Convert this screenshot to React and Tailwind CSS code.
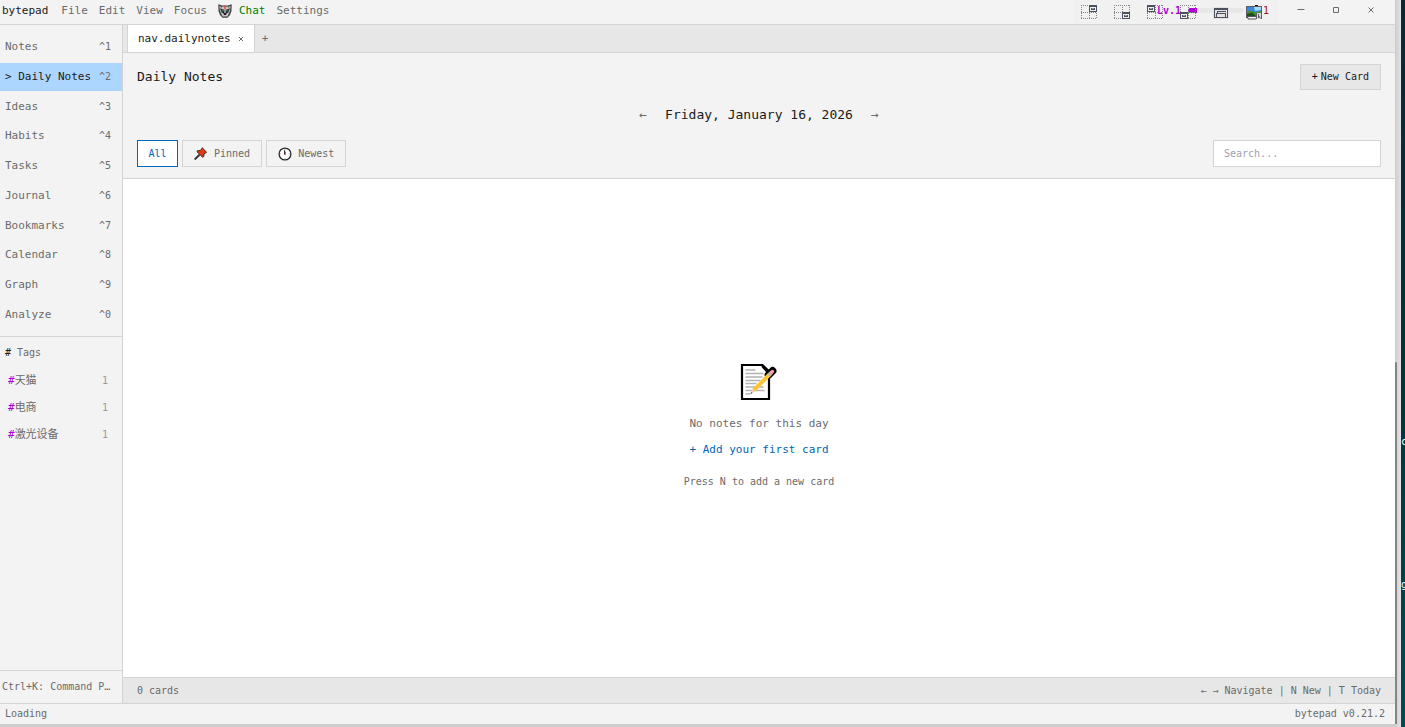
import React from "react";

const NAV = ["Notes", "Daily Notes", "Ideas", "Habits", "Tasks", "Journal", "Bookmarks", "Calendar", "Graph", "Analyze"];
const TAGS = ["天猫", "电商", "激光设备"];

function WolfIcon() {
  return (
    <svg width="14" height="14" viewBox="0 0 14 14" aria-hidden="true">
      <path d="M0.3 0.3 L4 1.5 H10 L13.7 0.3 L13.5 7 L12 11 L9.5 13.8 H4.5 L2 11 L0.5 7Z" fill="#3f3f3f" />
      <path d="M1.3 1.8 L3.3 3 L1.8 6Z M12.7 1.8 L10.7 3 L12.2 6Z" fill="#d3aaa4" />
      <path d="M3.8 2.5 H10.2 L12 7 L9.5 12.5 H4.5 L2 7Z" fill="#c4c4c4" />
      <path d="M3 4.8 L6.3 6 V9.2 L3.5 8.5Z M11 4.8 L7.7 6 V9.2 L10.5 8.5Z" fill="#161616" />
      <path d="M4.3 6.2h1.4v1.2H4.3z M8.3 6.2h1.4v1.2H8.3z" fill="#2fb6c8" />
      <path d="M6.3 1.5h1.4v4H6.3z" fill="#e2472f" />
      <path d="M5.3 9 H8.7 L8 11 H6Z" fill="#1c1c1c" />
    </svg>
  );
}

function PinIcon() {
  return (
    <svg width="14" height="14" viewBox="0 0 14 14" aria-hidden="true">
      <path d="M5 8.2 L1.3 11.9" stroke="#333" strokeWidth="2" strokeLinecap="round" />
      <path d="M8.2 0.8 L12.6 5.2 L11.6 6 L10 6.9 L9.8 9.6 L8.6 10.2 L3 4.8 L3.6 3.6 L6.3 3.6 L7.4 2.2Z" fill="#e5390f" stroke="#222" strokeWidth="0.9" strokeLinejoin="round" />
    </svg>
  );
}

function ClockIcon() {
  return (
    <svg width="14" height="14" viewBox="0 0 14 14" aria-hidden="true">
      <circle cx="7" cy="7" r="5.9" fill="#fff" stroke="#2b2b2b" strokeWidth="1.3" />
      <path d="M7 2v1M7 11v1M2 7h1M11 7h1" stroke="#999" strokeWidth="0.7" />
      <path d="M6.6 3.3 V7.6" stroke="#222" strokeWidth="1.1" />
      <path d="M7.3 5 V8" stroke="#d33" strokeWidth="0.9" />
    </svg>
  );
}

function MemoIcon() {
  return (
    <svg width="38" height="38" viewBox="0 0 38 38" aria-hidden="true">
      <path d="M2 2 H22.5 L29 8.5 V36 H2Z" fill="#fff" stroke="#000" strokeWidth="2.2" />
      <path d="M22 1 L29 7.5 L27 10 L21.5 4Z" fill="#000" />
      <path d="M5.5 7h10M5.5 10.5h18M5.5 14h17M5.5 17.5h15M5.5 20.5h11M5.5 24h18M5.5 27.5h19M5.5 31h5" stroke="#b3b3b3" strokeWidth="1.3" />
      <path d="M28.5 12 L32.6 7.9" stroke="#000" strokeWidth="7.6" strokeLinecap="round" />
      <path d="M13.8 27.2 L29 12" stroke="#fdc52f" strokeWidth="4" />
      <path d="M28.7 12.3 L31 10" stroke="#b9bcc4" strokeWidth="4" />
      <path d="M30.8 10.2 L32.4 8.6" stroke="#f1a0a0" strokeWidth="3.6" strokeLinecap="round" />
      <path d="M12.4 25.8 L15.2 28.6 L10.5 30.9Z" fill="#f6cfae" />
      <path d="M11.3 29.1 L12.4 30.1 L10.5 30.9Z" fill="#444" />
    </svg>
  );
}

function SnapIcon({ x, y }) {
  return (
    <svg width="17" height="15" viewBox="0 0 17 15" shapeRendering="crispEdges" aria-hidden="true">
      <path d="M0 0.5H16M0 7.5H16M0 13.5H16M0.5 0V14M8.5 0V14M15.5 0V14" fill="none" stroke="#858585" strokeDasharray="1 1" />
      <path d={`M${x} ${y}h8v7h-8z`} fill="#4c5160" />
      <path d={`M${x + 1} ${y + 2}h6v4h-6z`} fill="#f1f1f1" />
      <path d={`M${x + 2} ${y + 3}h4v2h-4z`} fill="#4c5160" />
      <path d={`M${x + 3} ${y + 3}h2v1h-2z`} fill="#9ea2ad" />
    </svg>
  );
}

function CardsIcon() {
  return (
    <svg width="17" height="15" viewBox="0 0 17 15" shapeRendering="crispEdges" aria-hidden="true">
      <rect x="0" y="2" width="16" height="12" fill="#e2e2e5" />
      <path d="M1.5 12V3.5h13v9h-3" fill="none" stroke="#4c5160" />
      <path d="M1 4.5h14" stroke="#4c5160" />
      <path d="M4.5 8V6.5H13M1 12.5h11V8.5H3.5V12" fill="none" stroke="#4c5160" />
    </svg>
  );
}

function MonitorIcon() {
  return (
    <svg width="17" height="15" viewBox="0 0 17 15" aria-hidden="true">
      <path d="M9 0h3v1H9z" fill="#111" />
      <rect x="0.5" y="1.5" width="15" height="10" fill="#3489dc" stroke="#555a66" />
      <path d="M8 2h7v3l-6 1z" fill="#a5dafa" />
      <path d="M1 6.5Q4 5 7.5 6.5T15 6V11H1Z" fill="#4b8c32" />
      <path d="M1 9l5-1.5 4 3.5H1z" fill="#1f4f17" />
      <path d="M0 12.5h2v1.5h8" fill="none" stroke="#555" />
      <path d="M10 8h6v6h-6z" fill="#d9dade" />
      <path d="M10.5 8v6M15.5 8v6M12.5 9v4M12.5 10.5l2 3" fill="none" stroke="#5b5e68" />
    </svg>
  );
}

const menuItem = "text-[#6b6b6b] whitespace-nowrap";

export default function App() {
  return (
    <div className="flex h-screen w-full overflow-hidden bg-[#cdcdcd] font-['DejaVu_Sans_Mono','Noto_Sans_CJK_SC',monospace] text-[11px] leading-4 text-[#6b6b6b]">
      <div className="mb-[3px] flex min-w-0 flex-1 flex-col bg-[#f3f3f3]">
        <header className="flex h-[25px] shrink-0 items-start justify-between border-b border-[#d4d4d4] pl-0.5">
          <nav className="flex h-[22px] items-center">
            <span className="mr-[13px] text-[#1a1a1a]">bytepad</span>
            <div className="flex items-center gap-[11px]">
              <button className={menuItem}>File</button>
              <button className={menuItem}>Edit</button>
              <button className={menuItem}>View</button>
              <button className={menuItem}>Focus</button>
              <button className="flex items-center gap-[7px] whitespace-nowrap text-[#008000]">
                <WolfIcon />
                Chat
              </button>
              <button className={menuItem}>Settings</button>
            </div>
          </nav>
          <div className="flex h-full items-center">
            <div className="relative mr-1 flex h-full w-[206px] items-center bg-[#f1f1f1] pb-[3px] pl-[84px] text-[10px]">
              <span className="w-[31px] font-bold text-[#af00db]">Lv.1</span>
              <div className="h-[5px] w-14 overflow-hidden rounded-full bg-[#e7e7e7]">
                <div className="h-full w-[9px] bg-[#af00db]" />
              </div>
              <span className="ml-[19px] text-[#a31515]">1</span>
              <div className="absolute top-[5px] left-2 flex gap-4">
                <SnapIcon x={8} y={0} />
                <SnapIcon x={8} y={7} />
                <SnapIcon x={0} y={0} />
                <SnapIcon x={0} y={7} />
                <CardsIcon />
                <MonitorIcon />
              </div>
            </div>
            <div className="flex h-full pr-[7px] pb-1">
              <button aria-label="Minimize" className="grid w-[35px] place-items-center">
                <svg width="8" height="8" viewBox="0 0 8 8"><path d="M0.5 3.5h7" stroke="#6b6b6b" /></svg>
              </button>
              <button aria-label="Maximize" className="grid w-[35px] place-items-center">
                <svg width="8" height="8" viewBox="0 0 8 8"><path d="M1.5 1.5h5v5h-5z" fill="none" stroke="#6b6b6b" /></svg>
              </button>
              <button aria-label="Close" className="grid w-[35px] place-items-center">
                <svg width="8" height="8" viewBox="0 0 8 8"><path d="M1.5 1.5l5 5M6.5 1.5l-5 5" stroke="#6b6b6b" /></svg>
              </button>
            </div>
          </div>
        </header>

        <div className="flex min-h-0 flex-1">
          <aside className="flex w-[123px] shrink-0 flex-col border-r border-[#d4d4d4]">
            <nav className="border-b border-[#d4d4d4] pt-2 pb-[7px]">
              <ul className="grid h-[296px] grid-rows-10 gap-px">
                {NAV.map((label, i) => (
                  <li key={label} className="grid">
                    <button
                      className={
                        label === "Daily Notes"
                          ? "flex items-center justify-between bg-[#add6ff] pr-[11px] pl-[5px] text-[#1a1a1a]"
                          : "flex items-center justify-between pr-[11px] pl-[5px]"
                      }
                    >
                      <span className="whitespace-pre">{label === "Daily Notes" ? "> Daily Notes" : label}</span>
                      <span className="text-[10px] text-[#6b6b6b]">^{(i + 1) % 10}</span>
                    </button>
                  </li>
                ))}
              </ul>
            </nav>
            <section className="min-h-0 flex-1 pt-2">
              <h2 className="px-[5px] text-[10px]"><span className="text-[#1a1a1a]">#</span> Tags</h2>
              <ul className="pt-[6px]">
                {TAGS.map((tag) => (
                  <li key={tag}>
                    <button className="flex h-[27px] w-full items-center justify-between pr-[14px] pl-2">
                      <span><span className="text-[#af00db]">#</span>{tag}</span>
                      <span className="text-[10px] text-[#9a9a9a]">1</span>
                    </button>
                  </li>
                ))}
              </ul>
            </section>
            <div className="h-[33px] shrink-0 truncate border-t border-[#d4d4d4] pt-2 pr-2 pl-0.5 text-[10px]">
              Ctrl+K: Command Palette
            </div>
          </aside>

          <main className="flex min-w-0 flex-1 flex-col">
            <div className="flex h-7 shrink-0 border-b border-[#d4d4d4] bg-[#e7e7e7] pl-1">
              <div className="flex items-center gap-[7px] border-x border-[#d4d4d4] bg-white px-[10px] text-[#1a1a1a]">
                <span>nav.dailynotes</span>
                <button aria-label="Close tab">
                  <svg width="6" height="6" viewBox="0 0 6 6"><path d="M1 1l4 4M5 1l-4 4" stroke="#6b6b6b" /></svg>
                </button>
              </div>
              <button className="px-[7px]" aria-label="New tab">+</button>
            </div>

            <div className="flex shrink-0 flex-col border-b border-[#d4d4d4] px-[14px] py-[11px]">
              <div className="flex items-center justify-between">
                <h1 className="text-[13px] text-[#1a1a1a]">Daily Notes</h1>
                <button className="flex h-[26px] items-center gap-[3px] border border-[#d4d4d4] bg-[#e7e7e7] px-[11px] text-[10px] text-[#1a1a1a]">
                  <span>+</span>
                  <span>New Card</span>
                </button>
              </div>
              <div className="flex h-[50px] items-center justify-center gap-[18px]">
                <button aria-label="Previous day" className="text-[13px]">←</button>
                <time dateTime="2026-01-16" className="text-[13px] text-[#1a1a1a]">Friday, January 16, 2026</time>
                <button aria-label="Next day" className="text-[13px]">→</button>
              </div>
              <div className="flex items-center justify-between text-[10px]">
                <div className="flex gap-1">
                  <button className="h-[27px] w-[41px] border border-[#0066b8] bg-white text-[#0066b8]">All</button>
                  <button className="flex h-[27px] items-center gap-[6px] border border-[#d4d4d4] px-[11px]">
                    <PinIcon />
                    Pinned
                  </button>
                  <button className="flex h-[27px] items-center gap-[6px] border border-[#d4d4d4] px-[11px]">
                    <ClockIcon />
                    Newest
                  </button>
                </div>
                <input
                  type="text"
                  aria-label="Search"
                  placeholder="Search..."
                  className="h-[27px] w-42 border border-[#d4d4d4] bg-white px-[10px] placeholder:text-[#9ca3af]"
                />
              </div>
            </div>

            <div className="flex min-h-0 flex-1 flex-col items-center justify-center bg-white pb-[3px]">
              <MemoIcon />
              <p className="mt-[15px]">No notes for this day</p>
              <button className="mt-[10px] text-[#0066b8]">+ Add your first card</button>
              <p className="mt-4 text-[10px]">Press N to add a new card</p>
            </div>

            <div className="flex h-[26px] shrink-0 items-center justify-between border-t border-[#d4d4d4] bg-[#e7e7e7] px-[14px] text-[10px]">
              <span>0 cards</span>
              <span>← → Navigate | N New | T Today</span>
            </div>
          </main>
        </div>

        <footer className="flex h-[21px] shrink-0 items-center justify-between border-t border-[#d4d4d4] pr-[10px] pl-[5px] text-[10px]">
          <span>Loading</span>
          <span>bytepad v0.21.2</span>
        </footer>
      </div>
      <div className="flex w-[6px] shrink-0 flex-col bg-linear-to-r from-[#cccccc] to-[#e4e4e4]">
        <div className="flex-1" />
        <div className="mb-[3px] h-[362px] w-0.5 rounded-t bg-[#858585]" />
      </div>
      <div className="relative w-1 shrink-0 overflow-hidden bg-linear-to-b from-[#022b35] via-[#01323d] to-[#014a58] text-[10px] text-white">
        <span className="absolute top-[434px] left-0">c</span>
        <span className="absolute top-[577px] left-0">g</span>
      </div>
    </div>
  );
}
